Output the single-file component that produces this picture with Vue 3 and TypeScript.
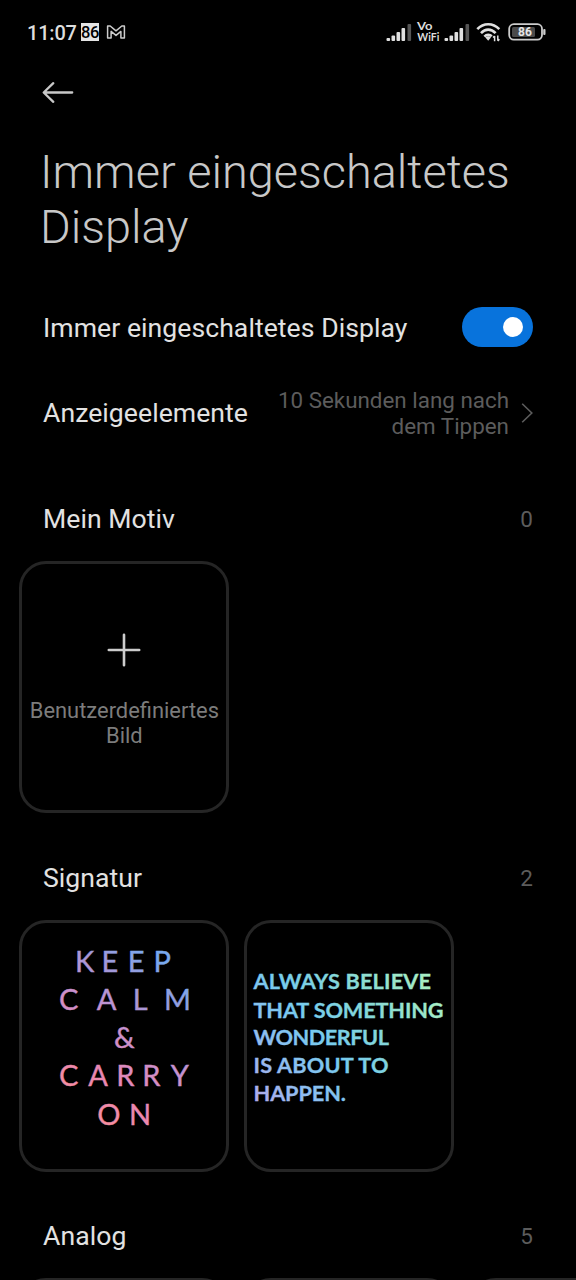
<script setup lang="ts">
interface SpacedLine {
  text: string
  x: string
  y: number
}

interface QuoteLine {
  text: string
  y: number
  width: number
}

const calmLines: SpacedLine[] = [
  { text: 'KEEP', x: '56 82.5 108.8 134.5', y: 52 },
  { text: 'CALM', x: '40 77.8 113.8 145', y: 90 },
  { text: '&', x: '95', y: 128.3 },
  { text: 'CARRY', x: '40 69.2 97.2 123.2 151.8', y: 166.3 },
  { text: 'ON', x: '78.2 110', y: 204.5 },
]

const quoteLines: QuoteLine[] = [
  { text: 'ALWAYS BELIEVE', y: 69.3, width: 177.5 },
  { text: 'THAT SOMETHING', y: 97.6, width: 190 },
  { text: 'WONDERFUL', y: 125.3, width: 135.5 },
  { text: 'IS ABOUT TO', y: 153, width: 135 },
  { text: 'HAPPEN.', y: 181.3, width: 92.5 },
]

const bars = [
  { x: 0.5, y: 15, h: 3 },
  { x: 5.5, y: 12.5, h: 5.5 },
  { x: 10.5, y: 9, h: 9 },
  { x: 15.5, y: 5, h: 13 },
  { x: 21.5, y: 1, h: 17 },
]
</script>

<template>
  <main class="screen">
    <header class="status">
      <span class="clock">11:07</span>
      <span class="chip">86</span>
      <svg class="mail" width="20" height="16" viewBox="0 0 20 16">
        <path d="M1.6 14V2H4.2L10 6.8L15.8 2H18.4V14H14.9V7.4L10 11.4L5.1 7.4V14Z" />
      </svg>
      <div class="indicators">
        <svg class="signal" width="26" height="19" viewBox="0 0 26 19">
          <rect v-for="(b, i) in bars" :key="i" :x="b.x" :y="b.y" width="3.6" :height="b.h" rx="1" :class="{ dim: i === 4 }" />
        </svg>
        <svg class="vowifi" width="24" height="26" viewBox="0 0 24 26">
          <text x="0" y="11" textLength="15.5" lengthAdjust="spacingAndGlyphs">Vo</text>
          <text x="0.3" y="22.3" textLength="22" lengthAdjust="spacingAndGlyphs">WiFi</text>
        </svg>
        <svg class="signal" width="26" height="19" viewBox="0 0 26 19">
          <rect v-for="(b, i) in bars" :key="i" :x="b.x" :y="b.y" width="3.6" :height="b.h" rx="1" :class="{ dim: i === 4 }" />
        </svg>
        <svg class="wifi" width="26" height="20" viewBox="0 0 26 20">
          <path d="M1.3 7.2Q6 2.2 12.2 2.2T23.3 7.2" />
          <path d="M5 11.2Q8.2 7.6 12.2 7.6T19.6 11.2" />
          <path d="M8.4 14.6Q10 12.9 12.2 12.9T15.8 14.2" />
          <path class="solid" d="M9.4 15.4Q12.2 13 15 15.4L12.2 18.8Z" />
          <path class="arrows" d="M18.6 19.2V14M17 15.6L18.6 13.9M21.8 13.6V18.8M23.4 17.2L21.8 18.9" />
        </svg>
        <svg class="battery" width="40" height="18" viewBox="0 0 40 18">
          <rect x="1.2" y="1.2" width="32.8" height="15.4" rx="4.6" class="shell" />
          <rect x="4" y="4" width="23" height="10" rx="1.5" class="level" />
          <rect x="35.2" y="6" width="2.3" height="6" rx="1" class="tip" />
          <text x="17" y="13.3" text-anchor="middle">86</text>
        </svg>
      </div>
    </header>

    <nav class="back">
      <svg width="32" height="24" viewBox="0 0 32 24">
        <path d="M30.2 12.5H2M11.3 3.2L1.7 12.5L11.3 21.8" />
      </svg>
    </nav>

    <h1>Immer eingeschaltetes<br />Display</h1>

    <section class="row toggle-row">
      <span class="label">Immer eingeschaltetes Display</span>
      <span class="switch"><span class="knob"></span></span>
    </section>
    <section class="row items-row">
      <span class="label">Anzeigeelemente</span>
      <span class="value">10 Sekunden lang nach<br />dem Tippen</span>
      <svg class="chevron" width="12" height="20" viewBox="0 0 12 20">
        <path d="M1.2 0.7L10.8 10L1.2 19.3" />
      </svg>
    </section>

    <section class="group">
      <div class="heading"><span class="label">Mein Motiv</span><span class="count">0</span></div>
      <div class="cards">
        <article class="card custom">
          <svg width="34" height="34" viewBox="0 0 34 34"><path d="M1.8 17H32.2M17 1.8V32.2" /></svg>
          <span>Benutzerdefiniertes<br />Bild</span>
        </article>
      </div>
    </section>

    <section class="group">
      <div class="heading"><span class="label">Signatur</span><span class="count">2</span></div>
      <div class="cards">
        <article class="card">
          <svg class="art" width="210" height="252" viewBox="0 0 210 252">
            <defs>
              <linearGradient id="calm" gradientUnits="userSpaceOnUse" x1="50" y1="180" x2="155" y2="52">
                <stop offset="0" stop-color="#f78f9d" />
                <stop offset="0.25" stop-color="#ea86b2" />
                <stop offset="0.55" stop-color="#c592d0" />
                <stop offset="0.78" stop-color="#a099da" />
                <stop offset="1" stop-color="#78a9ee" />
              </linearGradient>
            </defs>
            <text v-for="line in calmLines" :key="line.text" class="calm" :x="line.x" :y="line.y" fill="url(#calm)">{{ line.text }}</text>
          </svg>
        </article>
        <article class="card">
          <svg class="art" width="210" height="252" viewBox="0 0 210 252">
            <defs>
              <linearGradient id="quote" gradientUnits="userSpaceOnUse" x1="12" y1="183" x2="172" y2="55">
                <stop offset="0" stop-color="#b3aaea" />
                <stop offset="0.2" stop-color="#91bcf0" />
                <stop offset="0.45" stop-color="#76cbee" />
                <stop offset="0.72" stop-color="#86d9d5" />
                <stop offset="1" stop-color="#a5edc3" />
              </linearGradient>
            </defs>
            <text v-for="line in quoteLines" :key="line.text" class="quote" x="9.5" :y="line.y" :textLength="line.width" fill="url(#quote)">{{ line.text }}</text>
          </svg>
        </article>
      </div>
    </section>

    <section class="group">
      <div class="heading"><span class="label">Analog</span><span class="count">5</span></div>
      <div class="cards">
        <article v-for="n in 3" :key="n" class="card"></article>
      </div>
    </section>
  </main>
</template>

<style>
html,
body {
  background: #000;
}
</style>

<style scoped>
.screen {
  width: 576px;
  height: 1280px;
  overflow: hidden;
  background: #000;
  font-family: Roboto, "Liberation Sans", sans-serif;
  color: #e2e2e2;
}
svg {
  display: block;
  flex: none;
  fill: none;
}
.status {
  display: flex;
  align-items: center;
  height: 64px;
  padding: 0 28px 0 27px;
}
.clock {
  width: 54px;
  font-size: 20px;
  font-weight: 500;
  line-height: 24px;
  letter-spacing: -0.2px;
  color: #ddd;
  padding-top: 2px;
  box-sizing: border-box;
}
.chip {
  width: 18px;
  height: 18px;
  background: #e4e4e4;
  color: #000;
  font-size: 16.5px;
  font-weight: 500;
  line-height: 19px;
  text-align: center;
  letter-spacing: -0.4px;
}
.mail {
  margin-left: 7px;
  stroke: #ccc;
  stroke-width: 1.5;
  stroke-linejoin: round;
}
.indicators {
  display: flex;
  align-items: center;
  margin-left: auto;
}
.signal rect {
  fill: #e0e0e0;
}
.signal rect.dim {
  fill: #555;
}
.vowifi {
  margin: 0 3px 0 5px;
  overflow: visible;
}
.vowifi text {
  fill: #ddd;
  font-family: Lato, sans-serif;
  font-size: 12px;
  font-weight: 700;
}
.wifi {
  margin-left: 6px;
  stroke: #e0e0e0;
  stroke-width: 2.6;
}
.wifi .solid {
  fill: #e0e0e0;
  stroke: none;
}
.wifi .arrows {
  stroke-width: 1.5;
}
.battery {
  margin-left: 6px;
}
.shell {
  stroke: #ccc;
  stroke-width: 1.8;
}
.level {
  fill: #4a4a4a;
}
.tip {
  fill: #ccc;
}
.battery text {
  fill: #e5e5e5;
  font-size: 12px;
  font-weight: 700;
}
.back {
  height: 57px;
  padding: 16px 0 0 42px;
  box-sizing: border-box;
}
.back path {
  stroke: #c8c8c8;
  stroke-width: 2.3;
  stroke-linecap: round;
  stroke-linejoin: round;
}
h1 {
  margin: 0;
  height: 164px;
  padding: 23px 0 0 40px;
  box-sizing: border-box;
  font-size: 46.9px;
  font-weight: 300;
  line-height: 55px;
  color: #c8c8c8;
  white-space: nowrap;
}
.row {
  display: flex;
  align-items: center;
  padding: 0 43px;
}
.toggle-row {
  height: 84px;
}
.items-row {
  height: 88px;
}
.label {
  font-size: 26.6px;
  line-height: 32px;
  letter-spacing: 0.05px;
  white-space: nowrap;
}
.toggle-row .label {
  padding-top: 1px;
}
.switch {
  display: flex;
  align-items: center;
  justify-content: flex-end;
  width: 71.5px;
  height: 40px;
  margin-left: auto;
  padding-right: 10px;
  box-sizing: border-box;
  border-radius: 20px;
  background: #0873dc;
}
.knob {
  width: 20px;
  height: 20px;
  border-radius: 50%;
  background: #fff;
}
.value {
  margin-left: auto;
  font-size: 22.4px;
  line-height: 26px;
  text-align: right;
  color: #5c5c5c;
  white-space: nowrap;
}
.chevron {
  margin-left: 12px;
}
.chevron path {
  stroke: #5c5c5c;
  stroke-width: 1.6;
}
.group {
  height: 358.5px;
}
.items-row + .group {
  padding-top: 20px;
}
.heading {
  display: flex;
  align-items: center;
  justify-content: space-between;
  height: 84px;
  padding: 0 43px;
}
.count {
  font-size: 22.5px;
  color: #5c5c5c;
}
.cards {
  display: flex;
  gap: 15px;
  padding-left: 19.4px;
}
.card {
  flex: none;
  width: 210px;
  height: 252px;
  box-sizing: border-box;
  border: 3px solid #252525;
  border-radius: 27px;
}
.custom {
  display: flex;
  flex-direction: column;
  align-items: center;
  padding-top: 69px;
  font-size: 21.9px;
  line-height: 25.5px;
  text-align: center;
  color: #7c7c7c;
}
.custom svg {
  margin-bottom: 30.5px;
}
.custom path {
  stroke: #ccc;
  stroke-width: 2.6;
  stroke-linecap: round;
}
.art {
  margin: -3px;
}
.calm {
  font-family: Lato, sans-serif;
  font-size: 29px;
  stroke: url(#calm);
  stroke-width: 0.4;
}
.quote {
  font-family: Lato, sans-serif;
  font-size: 21.7px;
  font-weight: 700;
  stroke: url(#quote);
  stroke-width: 0.3;
}
</style>
